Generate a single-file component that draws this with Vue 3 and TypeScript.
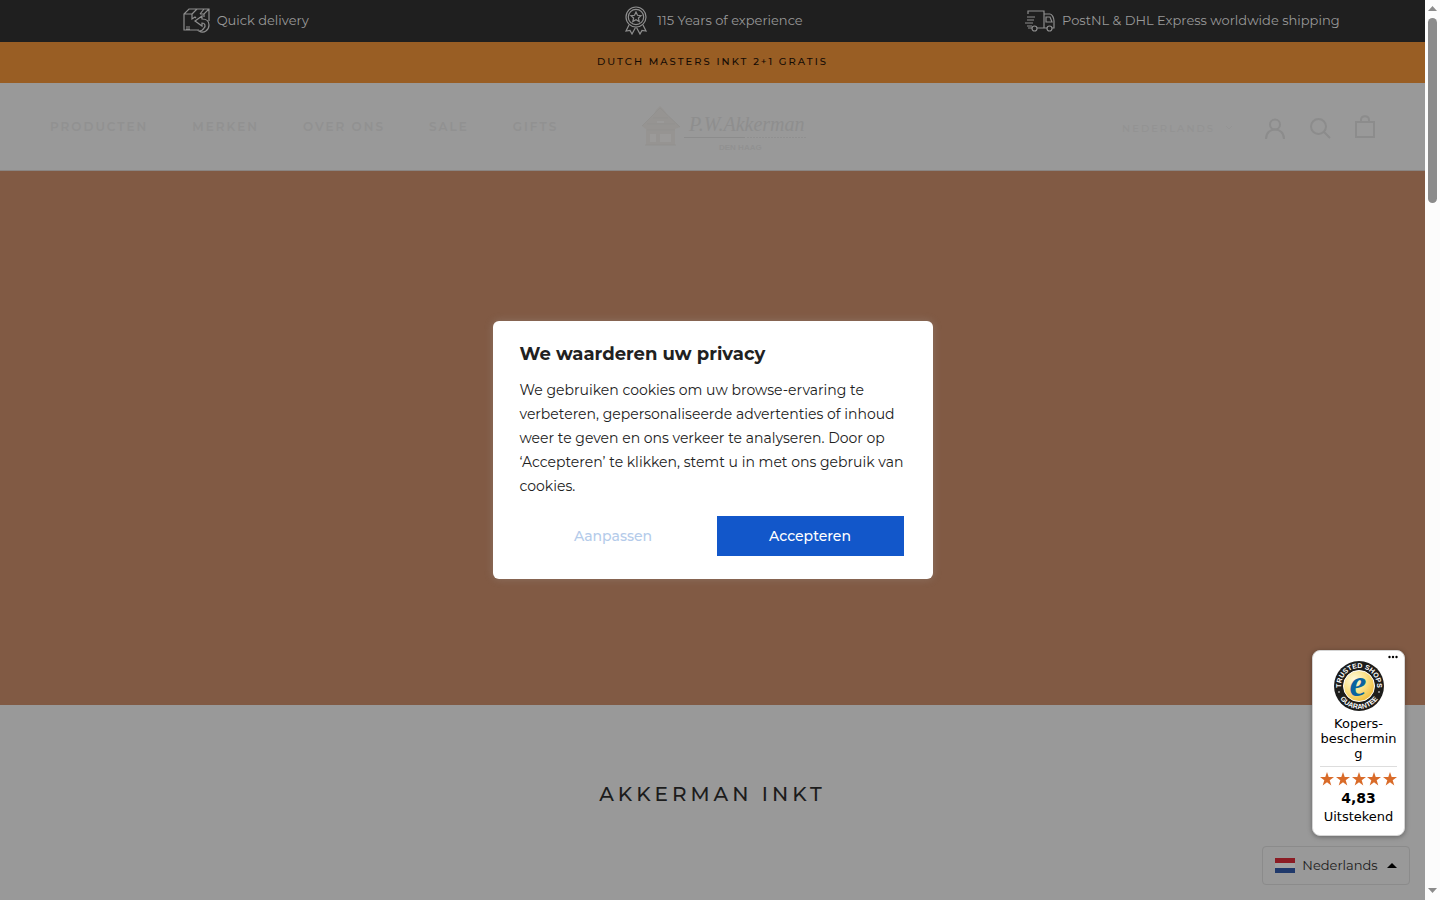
<script setup lang="ts">
const navItems: string[] = ['Producten', 'Merken', 'Over ons', 'Sale', 'Gifts']
const stars: number[] = [1, 2, 3, 4, 5]
</script>

<template>
  <div class="window">
    <div class="page">
      <div class="usp-bar">
        <div class="usp">
          <svg width="28" height="28" viewBox="0 0 28 28" class="line-icon">
            <path d="M17 24H2V8L7 3H27V15M2 8H10M18 8H22L27 3M22 8V11M10 8L15 3M18 8L22 3M10 8V13L13 11L14 12M4 21H8M4 23H8" />
            <path d="M20 10L13 15L20 20V17C23 17 24 20 22 22C21 24 19 25 17 25C22 28 27 24 27 19C27 15 24 13 20 13Z" />
          </svg>
          <span>Quick delivery</span>
        </div>
        <div class="usp">
          <svg width="24" height="30" viewBox="0 0 24 30" class="line-icon">
            <circle cx="12" cy="12" r="10" />
            <circle cx="12" cy="12" r="7.700" />
            <path d="M12 7L13.500 10.300L17 10.700L14.400 13L15.200 16.500L12 14.700L8.800 16.500L9.600 13L7 10.700L10.500 10.300ZM5 20L2 26L6 25.500L8 29L11.500 22.500M19 20L22 26L18 25.500L16 29L12.500 22.500" />
          </svg>
          <span class="wide-gap">115 Years of experience</span>
        </div>
        <div class="usp">
          <svg width="31" height="24" viewBox="0 0 31 24" class="line-icon">
            <path d="M4 6V3H20V20H13M4 20H8M3 9H11M3 12H10M1 15H9M3 18H8M20 6H26C28 6 30 10 30 13V20H28M20 20H23M22 9H26L28 14H22Z" />
            <circle cx="10.500" cy="20.500" r="2.500" />
            <circle cx="25.500" cy="20.500" r="2.500" />
          </svg>
          <span>PostNL &amp; DHL Express worldwide shipping</span>
        </div>
      </div>

      <div class="promo">Dutch Masters inkt 2+1 gratis</div>

      <header class="header">
        <nav class="nav">
          <a v-for="item in navItems" :key="item" href="#">{{ item }}</a>
        </nav>
        <a href="#" class="logo" aria-label="P.W. Akkerman Den Haag">
          <svg width="168" height="50" viewBox="0 0 168 50">
            <path d="M2 22L10 14L13 12L16 6L20 2L24 6L28 12L33 16L40 23L35 25V41H6V25Z" fill="#969492" />
            <path d="M2 22L20 4L40 23M7 20H35M13 14H28M7 26H35M5 41H36" fill="none" stroke="#92918f" />
            <path d="M10 30H16V38H10ZM20 30H31V38H20ZM17 17H24V19H17Z" fill="#9b9a99" />
            <text x="49" y="27" class="logo-script">P.W.Akkerman</text>
            <path d="M44 33.500H105" stroke="#8c8c8c" />
            <path d="M107 33.500H166" stroke="#909090" stroke-dasharray="2 1" />
            <text x="79" y="46" class="logo-sub">DEN HAAG</text>
          </svg>
        </a>
        <div class="tools">
          <button type="button" class="locale">Nederlands
            <svg width="8" height="6" viewBox="0 0 8 6"><path d="M1 1L4 4L7 1" fill="none" stroke="#949494" /></svg>
          </button>
          <button type="button" aria-label="Account">
            <svg width="22" height="22" viewBox="0 0 22 22" class="tool-icon">
              <circle cx="11" cy="7.500" r="5" />
              <path d="M2 22C2 16 6 12.500 11 12.500S20 16 20 22" />
            </svg>
          </button>
          <button type="button" aria-label="Zoeken">
            <svg width="22" height="22" viewBox="0 0 22 22" class="tool-icon">
              <circle cx="9.500" cy="9.500" r="7.500" />
              <path d="M15 15L21 21" />
            </svg>
          </button>
          <button type="button" aria-label="Winkelwagen">
            <svg width="22" height="26" viewBox="0 0 22 26" class="tool-icon">
              <path d="M2 7H20V22H2ZM7 7V5C7 0 15 0 15 5V7" />
            </svg>
          </button>
        </div>
      </header>

      <section class="hero"></section>
      <main class="collection">
        <h2>Akkerman inkt</h2>
      </main>

      <div class="consent-layer">
        <section class="consent" role="dialog" aria-labelledby="consent-title">
          <h1 id="consent-title">We waarderen uw privacy</h1>
          <p>We gebruiken cookies om uw browse-ervaring te verbeteren, gepersonaliseerde advertenties of inhoud weer te geven en ons verkeer te analyseren. Door op ‘Accepteren’ te klikken, stemt u in met ons gebruik van cookies.</p>
          <div class="consent-actions">
            <button type="button" class="customise">Aanpassen</button>
            <button type="button" class="accept">Accepteren</button>
          </div>
        </section>
      </div>

      <aside class="trust">
        <button type="button" class="trust-menu" aria-label="Menu">
          <svg width="10" height="4" viewBox="0 0 10 4"><circle cx="1.500" cy="2" r="1.200" /><circle cx="5" cy="2" r="1.200" /><circle cx="8.500" cy="2" r="1.200" /></svg>
        </button>
        <svg class="seal" width="50" height="50" viewBox="0 0 50 50">
          <defs>
            <radialGradient id="gold" cx="35%" cy="30%" r="75%">
              <stop offset="0" stop-color="#fffbe0" />
              <stop offset="0.500" stop-color="#fbe38c" />
              <stop offset="1" stop-color="#f0bd3c" />
            </radialGradient>
            <path id="arc-top" d="M8 31A18 18 0 1 1 42 31" />
            <path id="arc-bottom" d="M3 31A22.800 22.800 0 0 0 47 31" />
          </defs>
          <circle cx="25" cy="25" r="25" fill="#1d1d1b" />
          <circle cx="25" cy="25" r="15.500" fill="url(#gold)" stroke="#fff" />
          <text class="seal-text"><textPath href="#arc-top" startOffset="50%" text-anchor="middle">TRUSTED SHOPS</textPath></text>
          <text class="seal-text"><textPath href="#arc-bottom" startOffset="50%" text-anchor="middle">GUARANTEE</textPath></text>
          <circle cx="5" cy="31" r="0.800" fill="#fff" />
          <circle cx="45" cy="31" r="0.800" fill="#fff" />
          <text x="24" y="35" text-anchor="middle" class="seal-e">e</text>
        </svg>
        <div class="trust-title">Kopers-<br />beschermin<br />g</div>
        <hr />
        <div class="stars" role="img" aria-label="4,83 van 5 sterren">
          <svg v-for="s in stars" :key="s" width="14" height="14" viewBox="0 0 14 14">
            <path d="M7 0L8.700 5H14L9.700 8.200L11.300 13.500L7 10.300L2.700 13.500L4.300 8.200L0 5H5.300Z" fill="#d96b29" />
          </svg>
        </div>
        <strong>4,83</strong>
        <span class="verdict">Uitstekend</span>
      </aside>

      <button type="button" class="language">
        <svg width="20" height="15" viewBox="0 0 20 15">
          <path fill="#8b1c24" d="M0 0H20V5H0Z" />
          <path fill="#a2a2a2" d="M0 5H20V10H0Z" />
          <path fill="#20396b" d="M0 10H20V15H0Z" />
        </svg>
        <span class="language-name">Nederlands</span>
        <svg width="10" height="5" viewBox="0 0 10 5"><path d="M0 5L5 0L10 5Z" /></svg>
      </button>
    </div>

    <div class="scrollbar" aria-hidden="true">
      <svg width="15" height="15" viewBox="0 0 15 15"><path d="M3 11L7.500 6L12 11Z" fill="#8b8b8b" /></svg>
      <div class="track"><div class="thumb"></div></div>
      <svg width="15" height="15" viewBox="0 0 15 15"><path d="M3 3L7.500 8L12 3Z" fill="#8b8b8b" /></svg>
    </div>
  </div>
</template>

<style>
body {
  margin: 0;
}
</style>

<style scoped>
* {
  box-sizing: border-box;
}
.window {
  display: flex;
  height: 100vh;
  overflow: hidden;
  font-family: Montserrat, Inter, "Liberation Sans", sans-serif;
  color: #1c1c1c;
}
button {
  border: 0;
  padding: 0;
  background: none;
  font-family: inherit;
}
svg {
  display: block;
  flex: none;
}
.page {
  position: relative;
  flex: 1;
  display: flex;
  flex-direction: column;
  background: #999;
}
.usp-bar {
  display: grid;
  grid-template-columns: repeat(3, 1fr);
  height: 42px;
  padding: 0 9px 3px 11px;
  background: #1f1f1f;
  color: #999;
  font-size: 13px;
}
.usp {
  display: flex;
  align-items: center;
  justify-content: center;
  gap: 7px;
}
.wide-gap {
  margin-left: 2px;
}
.line-icon {
  fill: none;
  stroke: #8e8e8e;
  stroke-width: 1.2;
}
.promo {
  height: 41px;
  background: #995e24;
  color: #140b04;
  font-size: 10px;
  font-weight: 500;
  letter-spacing: 2px;
  line-height: 40px;
  text-align: center;
  text-transform: uppercase;
}
.header {
  display: grid;
  grid-template-columns: 1fr auto 1fr;
  align-items: center;
  height: 88px;
  padding: 0 49px 0 50px;
  border-bottom: 1px solid #8a8583;
}
.nav {
  display: flex;
  gap: 44px;
}
.nav a {
  color: #919191;
  font-size: 12px;
  font-weight: 600;
  letter-spacing: 2px;
  text-decoration: none;
  text-transform: uppercase;
  white-space: nowrap;
}
.logo {
  margin-left: 22px;
  padding-top: 4px;
}
.logo-script {
  fill: #8e8e8e;
  font: italic 20px "Liberation Serif", serif;
}
.logo-sub {
  fill: #919191;
  font: bold 8px "Liberation Sans", sans-serif;
}
.tools {
  display: flex;
  align-items: center;
  justify-content: flex-end;
  gap: 23px;
  padding-top: 3px;
}
.locale {
  display: flex;
  align-items: center;
  gap: 10px;
  margin-right: 8px;
  color: #939393;
  font-size: 10px;
  font-weight: 500;
  letter-spacing: 2px;
  text-transform: uppercase;
}
.tool-icon {
  fill: none;
  stroke: #8c8c8c;
  stroke-width: 2;
}
.hero {
  height: 534px;
  flex: none;
  background: #815a44;
}
.collection {
  flex: 1;
  text-align: center;
}
h2 {
  margin: 76px 0 0;
  font-size: 20px;
  font-weight: 500;
  letter-spacing: 4px;
  line-height: 26px;
  text-transform: uppercase;
}
.consent-layer {
  position: absolute;
  inset: 0;
  display: flex;
  align-items: center;
  justify-content: center;
}
.consent {
  width: 440px;
  padding: 21px 29px 23px 27px;
  border-radius: 6px;
  background: #fff;
  box-shadow: 0 0 8px rgba(172, 171, 171, 0.3);
  color: #212121;
}
h1 {
  margin: 0 0 11px;
  font-size: 18px;
  font-weight: 700;
  line-height: 25px;
}
.consent p {
  margin: 0 0 18px;
  font-size: 14px;
  line-height: 24px;
}
.consent-actions {
  display: grid;
  grid-template-columns: 1fr 1fr;
  gap: 10px;
}
.consent-actions button {
  height: 40px;
  font-size: 14px;
  font-weight: 500;
}
.customise {
  color: #b4cbea;
}
.consent-actions .accept {
  background: #1257ca;
  color: #fff;
}
.trust {
  position: absolute;
  right: 20px;
  bottom: 64px;
  display: flex;
  flex-direction: column;
  align-items: center;
  width: 93px;
  height: 186px;
  padding: 10px 7px 0;
  border: 1px solid #d5d5d5;
  border-radius: 8px;
  background: #fff;
  box-shadow: 0 1px 5px rgba(0, 0, 0, 0.35);
  color: #000;
  font-family: "DejaVu Sans", sans-serif;
  font-size: 13px;
  line-height: 15px;
  text-align: center;
}
.trust-menu {
  position: absolute;
  top: 4px;
  right: 6px;
}
.seal-text {
  fill: #fff;
  font: bold 7px "Liberation Sans", sans-serif;
}
.seal-e {
  fill: #0a63a0;
  font: italic bold 38px "Liberation Serif", serif;
}
.seal {
  margin-bottom: 5px;
  overflow: visible;
}
hr {
  width: 77px;
  margin: 5px 0;
  border: 0;
  border-top: 1px solid #ddd;
}
.stars {
  display: flex;
  justify-content: space-between;
  align-self: stretch;
}
.trust strong {
  margin-top: 3px;
  font-size: 14px;
  line-height: 18px;
}
.verdict {
  line-height: 20px;
}
.language {
  position: absolute;
  right: 15px;
  bottom: 15px;
  display: flex;
  align-items: center;
  justify-content: space-between;
  width: 148px;
  height: 39px;
  padding: 0 12px;
  border: 1px solid #8b8b8b;
  border-radius: 4px;
  background: #999;
  color: #1c1c1c;
  font-size: 13px;
}
.language-name {
  padding: 0 2px 2px 0;
}
.scrollbar {
  display: flex;
  flex-direction: column;
  width: 15px;
  background: #fcfcfc;
}
.track {
  flex: 1;
  padding: 3px 3px 0;
}
.thumb {
  height: 185px;
  width: 9px;
  border-radius: 5px;
  background: #8b8b8b;
}
</style>
